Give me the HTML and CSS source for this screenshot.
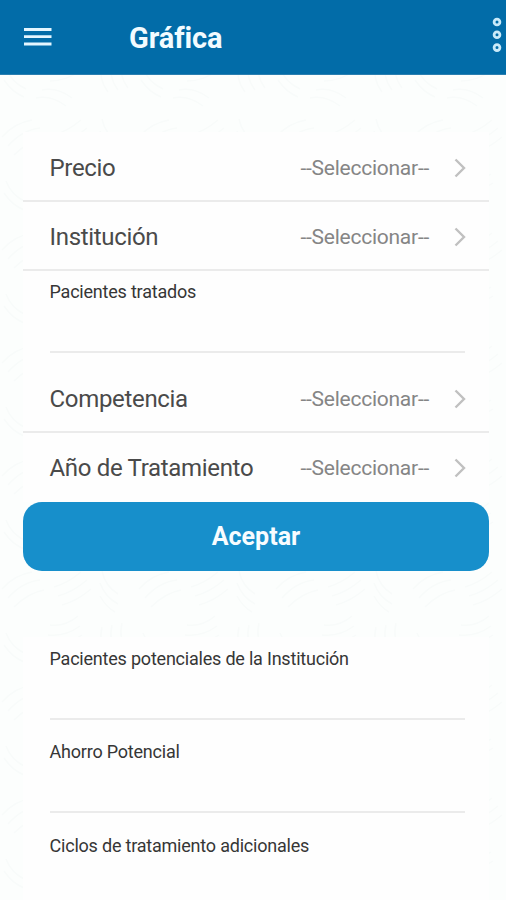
FILE: index.html
```html
<!DOCTYPE html>
<html lang="es">
<head>
<meta charset="utf-8">
<title>Gráfica</title>
<link rel="stylesheet" href="styles.css">
</head>
<body>
<svg class="texture" width="506" height="900" aria-hidden="true">
  <defs>
    <pattern id="strokes" width="137" height="113" patternUnits="userSpaceOnUse">
      <path d="M2 24q12-14 30-17M8 33q14-16 32-18M14 42q14-14 30-17M54 22q14-4 27-15M58 31q15-4 29-16M62 40q15-4 29-16M102 6q3 15 16 23M100 18q5 14 18 21M100 31q6 11 15 16M6 68q5 14 20 21M4 80q8 12 20 17M50 60q15 2 28-9M48 70q17 2 32-9M50 81q16 0 32-11M102 62q-4 17 6 30M112 60q-4 17 6 30M122 58q-4 17 6 30M36 98q15-3 30 8M42 90q15-3 30 8"/>
    </pattern>
  </defs>
  <rect width="506" height="900" fill="url(#strokes)"/>
</svg>
<header class="bar">
  <svg class="menu" width="28" height="20" viewBox="0 0 28 20"><path d="M0 2.5h27.5M0 9.7h27.5M0 17h27.5"/></svg>
  <h1 class="title">Gráfica</h1>
  <svg class="more" width="10" height="36" viewBox="0 0 10 36"><circle cx="5" cy="5" r="2.9"/><circle cx="5" cy="17.8" r="2.9"/><circle cx="5" cy="30.6" r="2.9"/></svg>
</header>
<main class="content">
  <section class="card">
    <div class="row"><span class="label">Precio</span><span class="value">--Seleccionar--</span><svg class="chevron" width="12" height="20" viewBox="0 0 12 20"><path d="M1.5 1.5L10 10l-8.5 8.5"/></svg></div>
    <div class="row"><span class="label">Institución</span><span class="value">--Seleccionar--</span><svg class="chevron" width="12" height="20" viewBox="0 0 12 20"><path d="M1.5 1.5L10 10l-8.5 8.5"/></svg></div>
    <div class="field compact"><span class="caption">Pacientes tratados</span></div>
    <div class="row"><span class="label">Competencia</span><span class="value">--Seleccionar--</span><svg class="chevron" width="12" height="20" viewBox="0 0 12 20"><path d="M1.5 1.5L10 10l-8.5 8.5"/></svg></div>
    <div class="row last"><span class="label">Año de Tratamiento</span><span class="value">--Seleccionar--</span><svg class="chevron" width="12" height="20" viewBox="0 0 12 20"><path d="M1.5 1.5L10 10l-8.5 8.5"/></svg></div>
  </section>
  <button class="accept" type="button">Aceptar</button>
  <section class="card results">
    <div class="field"><span class="caption">Pacientes potenciales de la Institución</span></div>
    <div class="field"><span class="caption">Ahorro Potencial</span></div>
    <div class="field"><span class="caption">Ciclos de tratamiento adicionales</span></div>
  </section>
</main>
</body>
</html>
```
FILE: styles.css
```css
* { box-sizing: border-box; }
body {
  margin: 0;
  height: 900px;
  overflow: hidden;
  position: relative;
  background: #fcfefd;
  font-family: Roboto, "Liberation Sans", sans-serif;
}
.texture { position: absolute; top: 0; left: 0; z-index: -1; }
.texture path { fill: none; stroke: #f8fbfa; stroke-width: 1.5; }
.bar {
  display: flex;
  align-items: center;
  height: 75px;
  padding-left: 24px;
  background: #026ca8;
  border-bottom: 1px solid #2b7fb0;
}
.menu path { stroke: #e4f6ff; stroke-width: 2.8; }
.title {
  margin: 2px auto 0 77px;
  font-size: 29px;
  line-height: 34px;
  font-weight: 700;
  letter-spacing: -0.1px;
  color: #f2fbff;
}
.more { margin: -4px 4px 0 0; }
.more circle { fill: none; stroke: #c9eaf9; stroke-width: 2.8; }
.content { padding: 57px 17px 0 23px; }
.card { background: #fefefe; }
.row {
  display: flex;
  align-items: center;
  height: 69px;
  padding: 4px 23px 0 26.5px;
  border-bottom: 2px solid #ebebeb;
}
.row:first-child { height: 70px; padding-top: 3px; }
.row:nth-child(2) { padding-top: 2px; }
.row.last { border-bottom-color: transparent; }
.label { font-size: 24px; letter-spacing: -0.32px; color: #4a4a4a; }
.value { margin-left: auto; font-size: 21px; letter-spacing: -0.25px; color: #858585; }
.chevron { margin-left: 25px; }
.chevron path { fill: none; stroke: #c0c0c0; stroke-width: 2.4; }
.field {
  height: 93.5px;
  padding: 11px 24px 0 26.5px;
}
.caption {
  display: block;
  height: 72px;
  border-bottom: 2px solid #ebebeb;
  font-size: 18px;
  line-height: 22px;
  letter-spacing: -0.21px;
  color: #363636;
}
.compact { height: 92.5px; padding-top: 10px; }
.accept {
  display: block;
  width: 100%;
  height: 69px;
  padding: 0;
  border: 0;
  border-radius: 19px;
  background: #178fcb;
  color: #f7fcff;
  font: 700 25px/69px Roboto, "Liberation Sans", sans-serif;
}
.results { margin-top: 66px; }
```
